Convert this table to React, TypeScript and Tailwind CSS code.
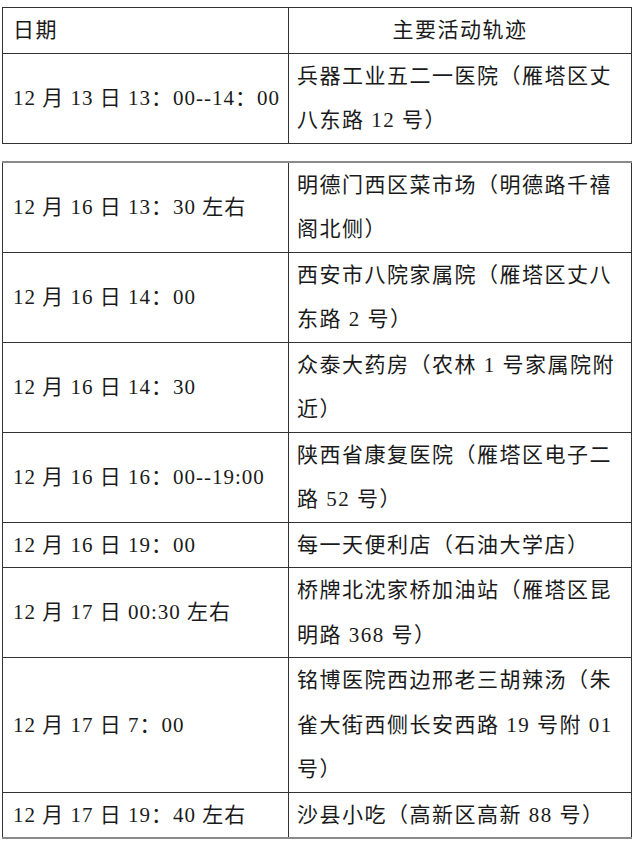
const firstRows = [
  {
    date: "12 月 13 日 13：00--14：00",
    place: ["兵器工业五二一医院（雁塔区丈", "八东路 12 号）"],
  },
];

const secondRows = [
  {
    date: "12 月 16 日 13：30 左右",
    place: ["明德门西区菜市场（明德路千禧", "阁北侧）"],
  },
  {
    date: "12 月 16 日 14：00",
    place: ["西安市八院家属院（雁塔区丈八", "东路 2 号）"],
  },
  {
    date: "12 月 16 日 14：30",
    place: ["众泰大药房（农林 1 号家属院附", "近）"],
  },
  {
    date: "12 月 16 日 16：00--19:00",
    place: ["陕西省康复医院（雁塔区电子二", "路 52 号）"],
  },
  {
    date: "12 月 16 日 19：00",
    place: ["每一天便利店（石油大学店）"],
  },
  {
    date: "12 月 17 日 00:30 左右",
    place: ["桥牌北沈家桥加油站（雁塔区昆", "明路 368 号）"],
  },
  {
    date: "12 月 17 日 7：00",
    place: ["铭博医院西边邢老三胡辣汤（朱", "雀大街西侧长安西路 19 号附 01", "号）"],
  },
  {
    date: "12 月 17 日 19：40 左右",
    place: ["沙县小吃（高新区高新 88 号）"],
  },
];

type Row = { date: string; place: string[] };

function Rows({ rows }: { rows: Row[] }) {
  return (
    <>
      {rows.map((r) => (
        <tr key={r.date}>
          <td className="w-[286px] border border-[#333] pl-[10px] align-middle whitespace-nowrap tracking-[1px]">
            {r.date}
          </td>
          <td className="border border-[#333] pl-[8px] align-middle tracking-[1.5px]">
            {r.place.map((line) => (
              <div key={line} className="whitespace-nowrap">
                {line}
              </div>
            ))}
          </td>
        </tr>
      ))}
    </>
  );
}

export default function App() {
  return (
    <div className="min-h-[843px] bg-white pl-[2px] pt-[7px] font-['Liberation_Serif','Noto_Sans_CJK_SC',serif] text-[21px] leading-[44.5px] text-[#1a1a1a]">
      <table className="w-[630px] table-fixed border-collapse">
        <tbody>
          <tr>
            <td className="w-[286px] border border-[#333] pl-[10px] tracking-[1.5px]">日期</td>
            <td className="border border-[#333] text-center tracking-[1.5px]">主要活动轨迹</td>
          </tr>
          <Rows rows={firstRows} />
        </tbody>
      </table>

      <div className="h-[17px]" />

      <table className="w-[630px] table-fixed border-collapse border-y-2 border-[#8a8a8a]">
        <tbody>
          <Rows rows={secondRows} />
        </tbody>
      </table>
    </div>
  );
}
